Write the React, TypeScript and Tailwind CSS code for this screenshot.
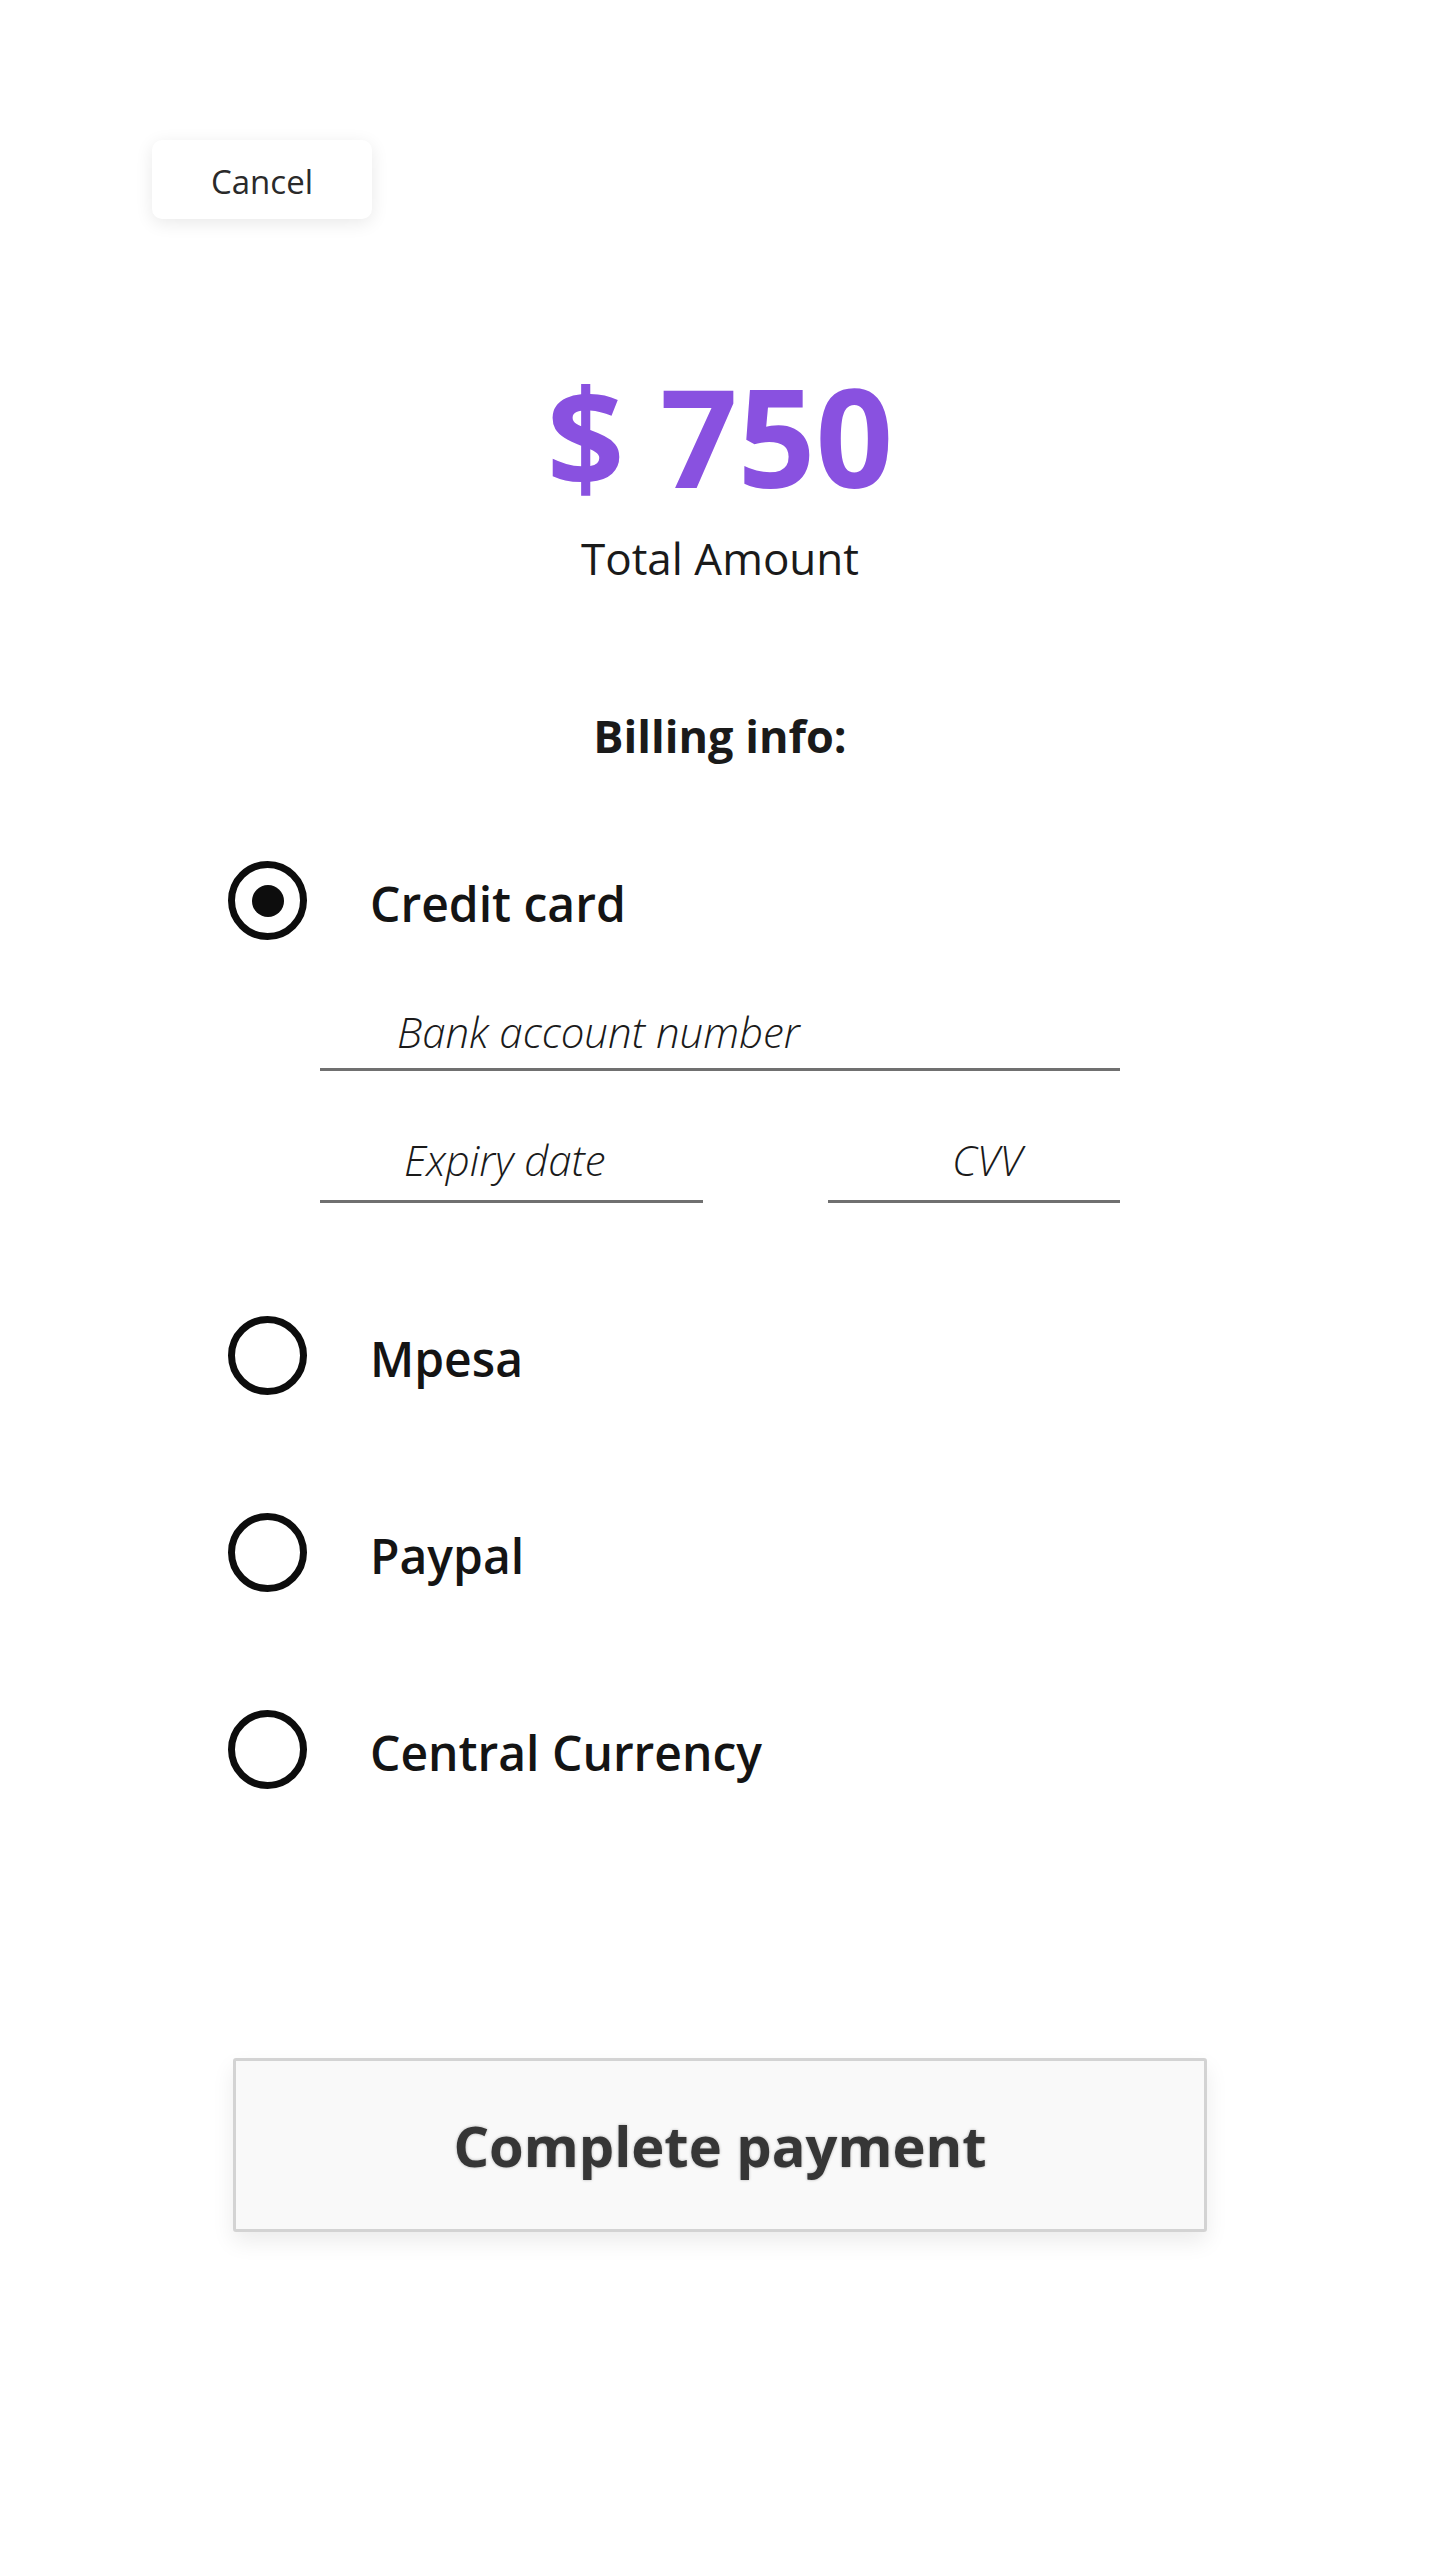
import { useState } from 'react';

const methods = ['Credit card', 'Mpesa', 'Paypal', 'Central Currency'];

function Radio({ checked }: { checked: boolean }) {
  return (
    <span className="w-[79px] h-[79px] shrink-0 rounded-full border-[7px] border-[#0d0d0d] flex items-center justify-center">
      {checked && <span className="w-[32px] h-[32px] rounded-full bg-[#0d0d0d]" />}
    </span>
  );
}

function MethodRow({ label, checked, onSelect }: { label: string; checked: boolean; onSelect: () => void }) {
  return (
    <button type="button" onClick={onSelect} className="flex items-center gap-[63px] h-[79px] text-left">
      <Radio checked={checked} />
      <span className="pt-[6px] text-[48px] leading-[48px] font-semibold text-[#141414]">{label}</span>
    </button>
  );
}

export default function App() {
  const [method, setMethod] = useState('Credit card');

  return (
    <div className="min-h-[2560px] bg-white font-['Open_Sans','Noto_Sans',sans-serif] flex flex-col">
      {/* cancel */}
      <div className="pt-[140px] pl-[152px]">
        <button
          type="button"
          className="w-[220px] h-[79px] rounded-[10px] bg-white shadow-[0_4px_18px_rgba(0,0,0,0.09)] text-[33px] leading-none text-[#2a2a2a] flex items-center justify-center pt-[4px]"
        >
          Cancel
        </button>
      </div>

      {/* amount */}
      <div className="mt-[149px] flex flex-col items-center">
        <div className="text-[136px] leading-[136px] font-bold text-[#8951e0]">$ 750</div>
        <div className="mt-[32px] text-[44px] leading-[44px] text-[#1a1a1a]">Total Amount</div>
        <div className="mt-[133px] text-[45px] leading-[45px] font-bold text-[#1a1a1a]">Billing info:</div>
      </div>

      {/* payment methods */}
      <div className="mt-[103px] pl-[228px] flex flex-col">
        <MethodRow label="Credit card" checked={method === 'Credit card'} onSelect={() => setMethod('Credit card')} />

        <div className="ml-[92px] w-[800px] mt-[71px]">
          <div className="border-b-[3px] border-[#707070] pl-[77px] pb-[15px] text-[42px] leading-[42px] font-light italic text-[#1a1a1a]">
            Bank account number
          </div>
          <div className="mt-[68px] flex justify-between">
            <div className="w-[383px] border-b-[3px] border-[#707070] pl-[84px] pb-[19px] text-[42px] leading-[42px] font-light italic text-[#1a1a1a]">
              Expiry date
            </div>
            <div className="w-[292px] border-b-[3px] border-[#707070] pl-[124px] pb-[19px] text-[42px] leading-[42px] font-light italic text-[#1a1a1a]">
              CVV
            </div>
          </div>
        </div>

        <div className="mt-[113px] flex flex-col gap-[118px]">
          {methods.slice(1).map(m => (
            <MethodRow key={m} label={m} checked={method === m} onSelect={() => setMethod(m)} />
          ))}
        </div>
      </div>

      {/* submit */}
      <div className="mt-[269px] flex justify-center">
        <button
          type="button"
          className="w-[974px] h-[174px] rounded-[3px] border-[3px] border-[#d3d3d3] bg-[#f9f9f9] shadow-[0_10px_22px_rgba(0,0,0,0.08)] text-[56px] leading-none font-bold text-[#363636] [text-shadow:0_0_3px_rgba(0,0,0,0.3)] flex items-center justify-center"
        >
          Complete payment
        </button>
      </div>
    </div>
  );
}
